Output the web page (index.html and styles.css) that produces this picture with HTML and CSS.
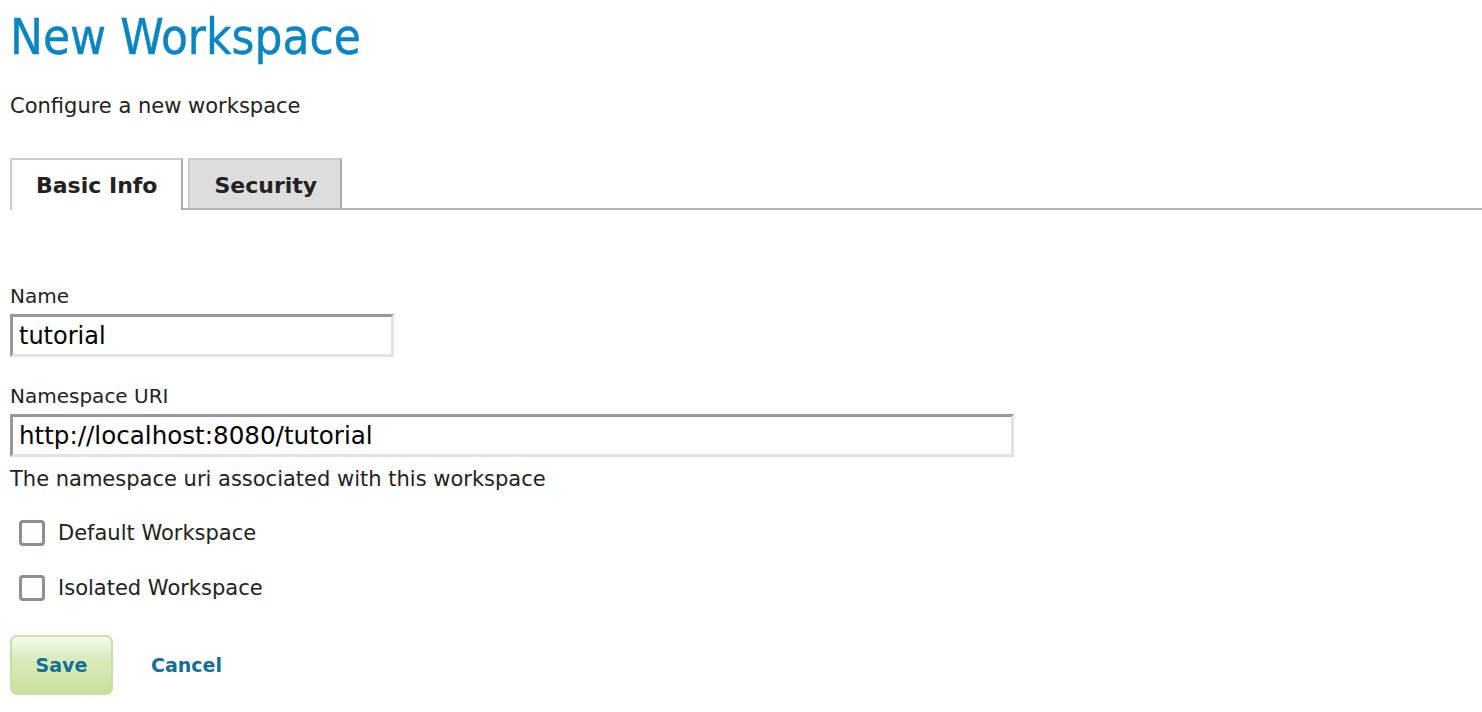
FILE: index.html
```html
<!DOCTYPE html>
<html>
<head>
<meta charset="utf-8">
<link rel="stylesheet" href="styles.css">
</head>
<body>
<div class="page">
  <h1 class="title">New Workspace</h1>
  <p class="subtitle">Configure a new workspace</p>
  <ul class="tabs">
    <li class="tab active">Basic Info</li>
    <li class="tab">Security</li>
  </ul>
  <form class="form">
    <label class="label label-name" for="name">Name</label>
    <input class="field field-name" id="name" type="text" value="tutorial">
    <label class="label label-uri" for="uri">Namespace URI</label>
    <input class="field field-uri" id="uri" type="text" value="http://localhost:8080/tutorial">
    <p class="help">The namespace uri associated with this workspace</p>
    <div class="check-row check-first">
      <input class="check" type="checkbox" id="def">
      <label for="def" class="check-label">Default Workspace</label>
    </div>
    <div class="check-row">
      <input class="check" type="checkbox" id="iso">
      <label for="iso" class="check-label">Isolated Workspace</label>
    </div>
    <div class="buttons">
      <button type="button" class="save">Save</button>
      <a class="cancel" href="#">Cancel</a>
    </div>
  </form>
</div>
</body>
</html>
```

FILE: styles.css
```css
html, body {
  margin: 0;
  padding: 0;
  background: #ffffff;
}
body {
  font-family: "DejaVu Sans", Verdana, sans-serif;
  color: #222222;
}
.page {
  padding: 0 0 0 10px;
  display: flex;
  flex-direction: column;
}
.title {
  margin: 0;
  padding-top: 8px;
  font-family: "DejaVu Sans Condensed", "DejaVu Sans", sans-serif;
  font-stretch: condensed;
  font-weight: normal;
  font-size: 49px;
  line-height: 59px;
  color: #0a85c0;
  -webkit-text-stroke: 0.4px #0a85c0;
}
.subtitle {
  margin: 27px 0 0 0;
  font-size: 21px;
  line-height: 24px;
  color: #222222;
}
.tabs {
  list-style: none;
  margin: 40px 0 0 0;
  padding: 0;
  display: flex;
  align-items: flex-end;
  gap: 5px;
  border-bottom: 2px solid #b5b5b5;
}
.tab {
  font-weight: bold;
  font-size: 22px;
  line-height: 26px;
  padding: 13px 23px 9px 24px;
  border-top: 2px solid #cccccc;
  border-left: 2px solid #cccccc;
  border-right: 2px solid #ababab;
  background: #dddddd;
  color: #222222;
}
.tab.active {
  background: #ffffff;
  margin-bottom: -2px;
  padding-bottom: 11px;
  padding-right: 24px;
}
.form {
  display: flex;
  flex-direction: column;
  align-items: flex-start;
  margin: 0;
}
.label {
  font-size: 20px;
  line-height: 24px;
  color: #222222;
}
.label-name {
  margin-top: 74px;
}
.label-uri {
  margin-top: 27px;
}
.field {
  margin: 6px 0 0 0;
  box-sizing: border-box;
  height: 43px;
  padding: 0 0 0 6px;
  font-family: "DejaVu Sans", Verdana, sans-serif;
  font-size: 24px;
  color: #000000;
  border-style: solid;
  border-width: 3px;
  border-color: #999999 #e3e3e3 #e3e3e3 #999999;
  outline: none;
  background: #ffffff;
}
.field-name {
  width: 384px;
}
.field-uri {
  width: 1004px;
  font-size: 24.6px;
}
.help {
  margin: 10px 0 0 0;
  font-size: 21px;
  line-height: 24px;
  color: #222222;
}
.check-row {
  display: flex;
  align-items: center;
  gap: 13px;
  padding-left: 9px;
  margin-top: 29px;
  height: 26px;
}
.check-first {
  margin-top: 29px;
}
.check {
  appearance: none;
  -webkit-appearance: none;
  margin: 0;
  width: 26px;
  height: 26px;
  box-sizing: border-box;
  border: 3px solid #8f8d9b;
  border-radius: 4px;
  background: #ffffff;
}
.check-label {
  font-size: 21px;
  line-height: 24px;
  color: #222222;
}
.buttons {
  display: flex;
  align-items: center;
  gap: 38px;
  margin-top: 34px;
}
.save {
  width: 103px;
  height: 60px;
  box-sizing: border-box;
  border: 2px solid #c6e1a4;
  border-radius: 7px;
  background: linear-gradient(to bottom, #f4faee 0%, #d9ebbb 40%, #c8e19c 100%);
  font-family: "DejaVu Sans", Verdana, sans-serif;
  font-weight: bold;
  font-size: 19px;
  color: #156e95;
  padding: 0;
}
.cancel {
  font-weight: bold;
  font-size: 19px;
  color: #156e95;
  text-decoration: none;
}
```
